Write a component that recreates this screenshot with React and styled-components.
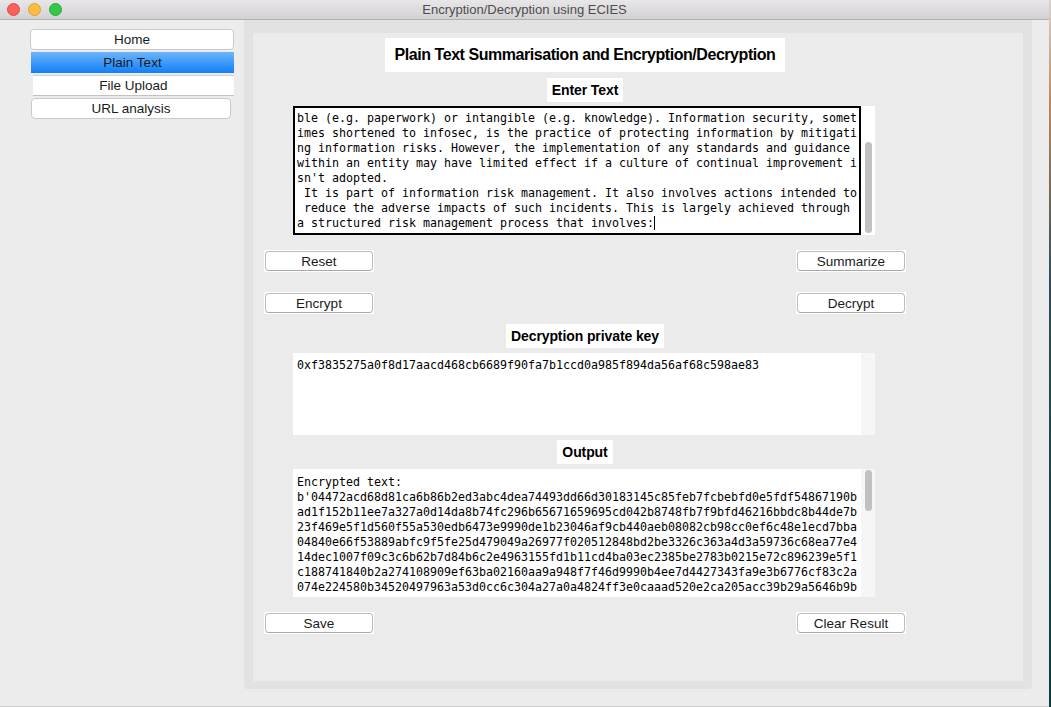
import React from "react";
import styled, { createGlobalStyle } from "styled-components";

const inputLines = [
  "ble (e.g. paperwork) or intangible (e.g. knowledge). Information security, somet",
  "imes shortened to infosec, is the practice of protecting information by mitigati",
  "ng information risks. However, the implementation of any standards and guidance ",
  "within an entity may have limited effect if a culture of continual improvement i",
  "sn't adopted.",
  " It is part of information risk management. It also involves actions intended to",
  " reduce the adverse impacts of such incidents. This is largely achieved through",
  "a structured risk management process that involves:",
];

const outputLines = [
  "Encrypted text:",
  "b'04472acd68d81ca6b86b2ed3abc4dea74493dd66d30183145c85feb7fcbebfd0e5fdf54867190b",
  "ad1f152b11ee7a327a0d14da8b74fc296b65671659695cd042b8748fb7f9bfd46216bbdc8b44de7b",
  "23f469e5f1d560f55a530edb6473e9990de1b23046af9cb440aeb08082cb98cc0ef6c48e1ecd7bba",
  "04840e66f53889abfc9f5fe25d479049a26977f020512848bd2be3326c363a4d3a59736c68ea77e4",
  "14dec1007f09c3c6b62b7d84b6c2e4963155fd1b11cd4ba03ec2385be2783b0215e72c896239e5f1",
  "c188741840b2a274108909ef63ba02160aa9a948f7f46d9990b4ee7d4427343fa9e3b6776cf83c2a",
  "074e224580b34520497963a53d0cc6c304a27a0a4824ff3e0caaad520e2ca205acc39b29a5646b9b",
];

const navItems = [
  { label: "Home", left: 30, width: 204, top: 9, kind: "round" },
  { label: "Plain Text", left: 31, width: 203, top: 2, kind: "active" },
  { label: "File Upload", left: 33, width: 201, top: 2, kind: "flat" },
  { label: "URL analysis", left: 31, width: 200, top: 2, kind: "round" },
];

const App = () => {
  return (
    <>
      <GlobalStyle />
      <Screen>
        <Window>
          <TitleBar>
            <Lights>
              <Light $color="#fc605b" $edge="#de4a45" />
              <Light $color="#fdbc40" $edge="#dea236" />
              <Light $color="#34c84a" $edge="#27aa36" />
            </Lights>
            <WindowTitle>Encryption/Decryption using ECIES</WindowTitle>
          </TitleBar>
          <Body>
            <Sidebar>
              {navItems.map((item) => (
                <NavButton
                  key={item.label}
                  $left={item.left}
                  $width={item.width}
                  $top={item.top}
                  $kind={item.kind}
                >
                  {item.label}
                </NavButton>
              ))}
            </Sidebar>
            <Frame>
              <Panel>
                <Column>
                  <Heading>
                    Plain Text Summarisation and Encryption/Decryption
                  </Heading>
                  <Label $top={6}>Enter Text</Label>
                  <TextBox $top={4} $height={129}>
                    <TextContent $outlined>
                      {inputLines.map((line, i) => (
                        <Line key={i}>
                          {line}
                          {i === inputLines.length - 1 && <Caret />}
                        </Line>
                      ))}
                    </TextContent>
                    <Track>
                      <Thumb $offset={36} $size={91} />
                    </Track>
                  </TextBox>
                  <ButtonRow $top={15}>
                    <Button>
                      <ButtonFace>Reset</ButtonFace>
                    </Button>
                    <Button>
                      <ButtonFace>Summarize</ButtonFace>
                    </Button>
                  </ButtonRow>
                  <ButtonRow $top={20}>
                    <Button>
                      <ButtonFace>Encrypt</ButtonFace>
                    </Button>
                    <Button>
                      <ButtonFace>Decrypt</ButtonFace>
                    </Button>
                  </ButtonRow>
                  <Label $top={10}>Decryption private key</Label>
                  <TextBox $top={5} $height={82}>
                    <TextContent>
                      <Line>0xf3835275a0f8d17aacd468cb6689f90fa7b1ccd0a985f894da56af68c598ae83</Line>
                    </TextContent>
                    <Track $tint="#f6f6f6" />
                  </TextBox>
                  <Label $top={5}>Output</Label>
                  <TextBox $top={5} $height={128} $padTop={6}>
                    <TextContent $padTop={6}>
                      {outputLines.map((line, i) => (
                        <Line key={i}>{line}</Line>
                      ))}
                    </TextContent>
                    <Track $tint="#f6f6f6">
                      <Thumb $offset={1} $size={41} />
                    </Track>
                  </TextBox>
                  <ButtonRow $top={15}>
                    <Button>
                      <ButtonFace>Save</ButtonFace>
                    </Button>
                    <Button>
                      <ButtonFace>Clear Result</ButtonFace>
                    </Button>
                  </ButtonRow>
                </Column>
              </Panel>
            </Frame>
          </Body>
        </Window>
        <DesktopEdge />
      </Screen>
    </>
  );
};

const GlobalStyle = createGlobalStyle`
  html, body {
    margin: 0;
    padding: 0;
    background: #ececec;
    font-family: "Liberation Sans", Arial, sans-serif;
  }
`;

const Screen = styled.div`
  display: flex;
  width: 1051px;
  height: 707px;
  overflow: hidden;
`;

const Window = styled.div`
  flex: 1;
  display: flex;
  flex-direction: column;
  background: #ececec;
  border-bottom: 1px solid #cfcfcf;
  box-sizing: border-box;
`;

const DesktopEdge = styled.div`
  width: 2px;
  background: linear-gradient(#d9d4cf 0%, #b8875e 15%, #2e4d57 40%, #0f3a48 100%);
`;

const TitleBar = styled.div`
  height: 19px;
  flex-shrink: 0;
  display: flex;
  align-items: center;
  background: linear-gradient(#e8e6e8, #d3d1d3);
  border-bottom: 1px solid #b1b1b1;
`;

const Lights = styled.div`
  display: flex;
  gap: 8px;
  padding-left: 7px;
  width: 80px;
`;

const Light = styled.span`
  width: 11px;
  height: 11px;
  border-radius: 50%;
  background: ${(p) => p.$color};
  border: 0.5px solid ${(p) => p.$edge};
`;

const WindowTitle = styled.div`
  flex: 1;
  text-align: center;
  margin-left: -87px;
  font-size: 13px;
  color: #4d4d4d;
`;

const Body = styled.div`
  flex: 1;
  display: flex;
  padding-right: 17px;
`;

const Sidebar = styled.div`
  width: 244px;
  flex-shrink: 0;
  display: flex;
  flex-direction: column;
`;

const NavButton = styled.div`
  box-sizing: border-box;
  height: 21px;
  margin-top: ${(p) => p.$top}px;
  margin-left: ${(p) => p.$left}px;
  width: ${(p) => p.$width}px;
  display: flex;
  align-items: center;
  justify-content: center;
  font-size: 13.5px;
  color: #1a1a1a;
  background: ${(p) =>
    p.$kind === "active" ? "linear-gradient(#6db5fb, #117ff9)" : "#ffffff"};
  border-radius: ${(p) => (p.$kind === "round" ? "4px" : "0")};
  border: ${(p) => (p.$kind === "round" ? "1px solid #c9c9c9" : "none")};
  border-top: ${(p) => (p.$kind === "flat" ? "1px solid #d0d0d0" : "")};
  border-bottom: ${(p) => (p.$kind === "flat" ? "1px solid #c2c2c2" : "")};
`;

const Frame = styled.div`
  width: 788px;
  margin-bottom: 17px;
  box-sizing: border-box;
  padding: 13px 9px 8px 9px;
  background: #e2e2e2;
  border-radius: 0 0 4px 4px;
  display: flex;
`;

const Panel = styled.div`
  flex: 1;
  background: #ebebeb;
  padding-left: 11px;
`;

const Column = styled.div`
  width: 642px;
  display: flex;
  flex-direction: column;
  align-items: center;
`;

const Heading = styled.h1`
  margin: 5px 0 0 0;
  width: 400px;
  height: 34px;
  background: #ffffff;
  display: flex;
  align-items: center;
  justify-content: center;
  font-size: 16px;
  font-weight: bold;
  letter-spacing: -0.45px;
  color: #000;
`;

const Label = styled.div`
  margin-top: ${(p) => p.$top}px;
  height: 24px;
  padding: 0 5px;
  background: #ffffff;
  display: flex;
  align-items: center;
  font-size: 14px;
  font-weight: bold;
  letter-spacing: -0.1px;
  color: #000;
`;

const TextBox = styled.div`
  margin-top: ${(p) => p.$top}px;
  align-self: flex-start;
  margin-left: 29px;
  width: 582px;
  height: ${(p) => p.$height}px;
  display: flex;
  background: #ffffff;
`;

const TextContent = styled.div`
  flex: 1;
  box-sizing: border-box;
  overflow: hidden;
  border: ${(p) => (p.$outlined ? "2px solid #000" : "none")};
  padding: ${(p) =>
    p.$outlined ? "3px 0 0 2px" : `${p.$padTop || 5}px 0 0 4px`};
  font-family: "DejaVu Sans Mono", "Liberation Mono", monospace;
  font-size: 11.63px;
  line-height: 15px;
  color: #000;
`;

const Line = styled.div`
  white-space: pre;
  height: 15px;
`;

const Caret = styled.span`
  display: inline-block;
  width: 0;
  height: 14px;
  border-left: 1px solid #000;
  vertical-align: -3px;
`;

const Track = styled.div`
  width: 14px;
  flex-shrink: 0;
  background: ${(p) => p.$tint || "#ffffff"};
  display: flex;
  flex-direction: column;
  align-items: center;
`;

const Thumb = styled.div`
  margin-top: ${(p) => p.$offset}px;
  height: ${(p) => p.$size}px;
  width: 7px;
  border-radius: 4px;
  background: #c1c1c1;
`;

const ButtonRow = styled.div`
  margin-top: ${(p) => p.$top}px;
  align-self: stretch;
  display: flex;
  justify-content: space-between;
`;

const Button = styled.div`
  width: 110px;
  height: 22px;
  box-sizing: border-box;
  padding: 1px;
  background: #ffffff;
`;

const ButtonFace = styled.div`
  height: 100%;
  box-sizing: border-box;
  border: 1px solid #bcbcbc;
  border-bottom-color: #a9a9a9;
  border-radius: 4px;
  display: flex;
  align-items: center;
  justify-content: center;
  font-size: 13.5px;
  color: #1a1a1a;
`;

export default App;
